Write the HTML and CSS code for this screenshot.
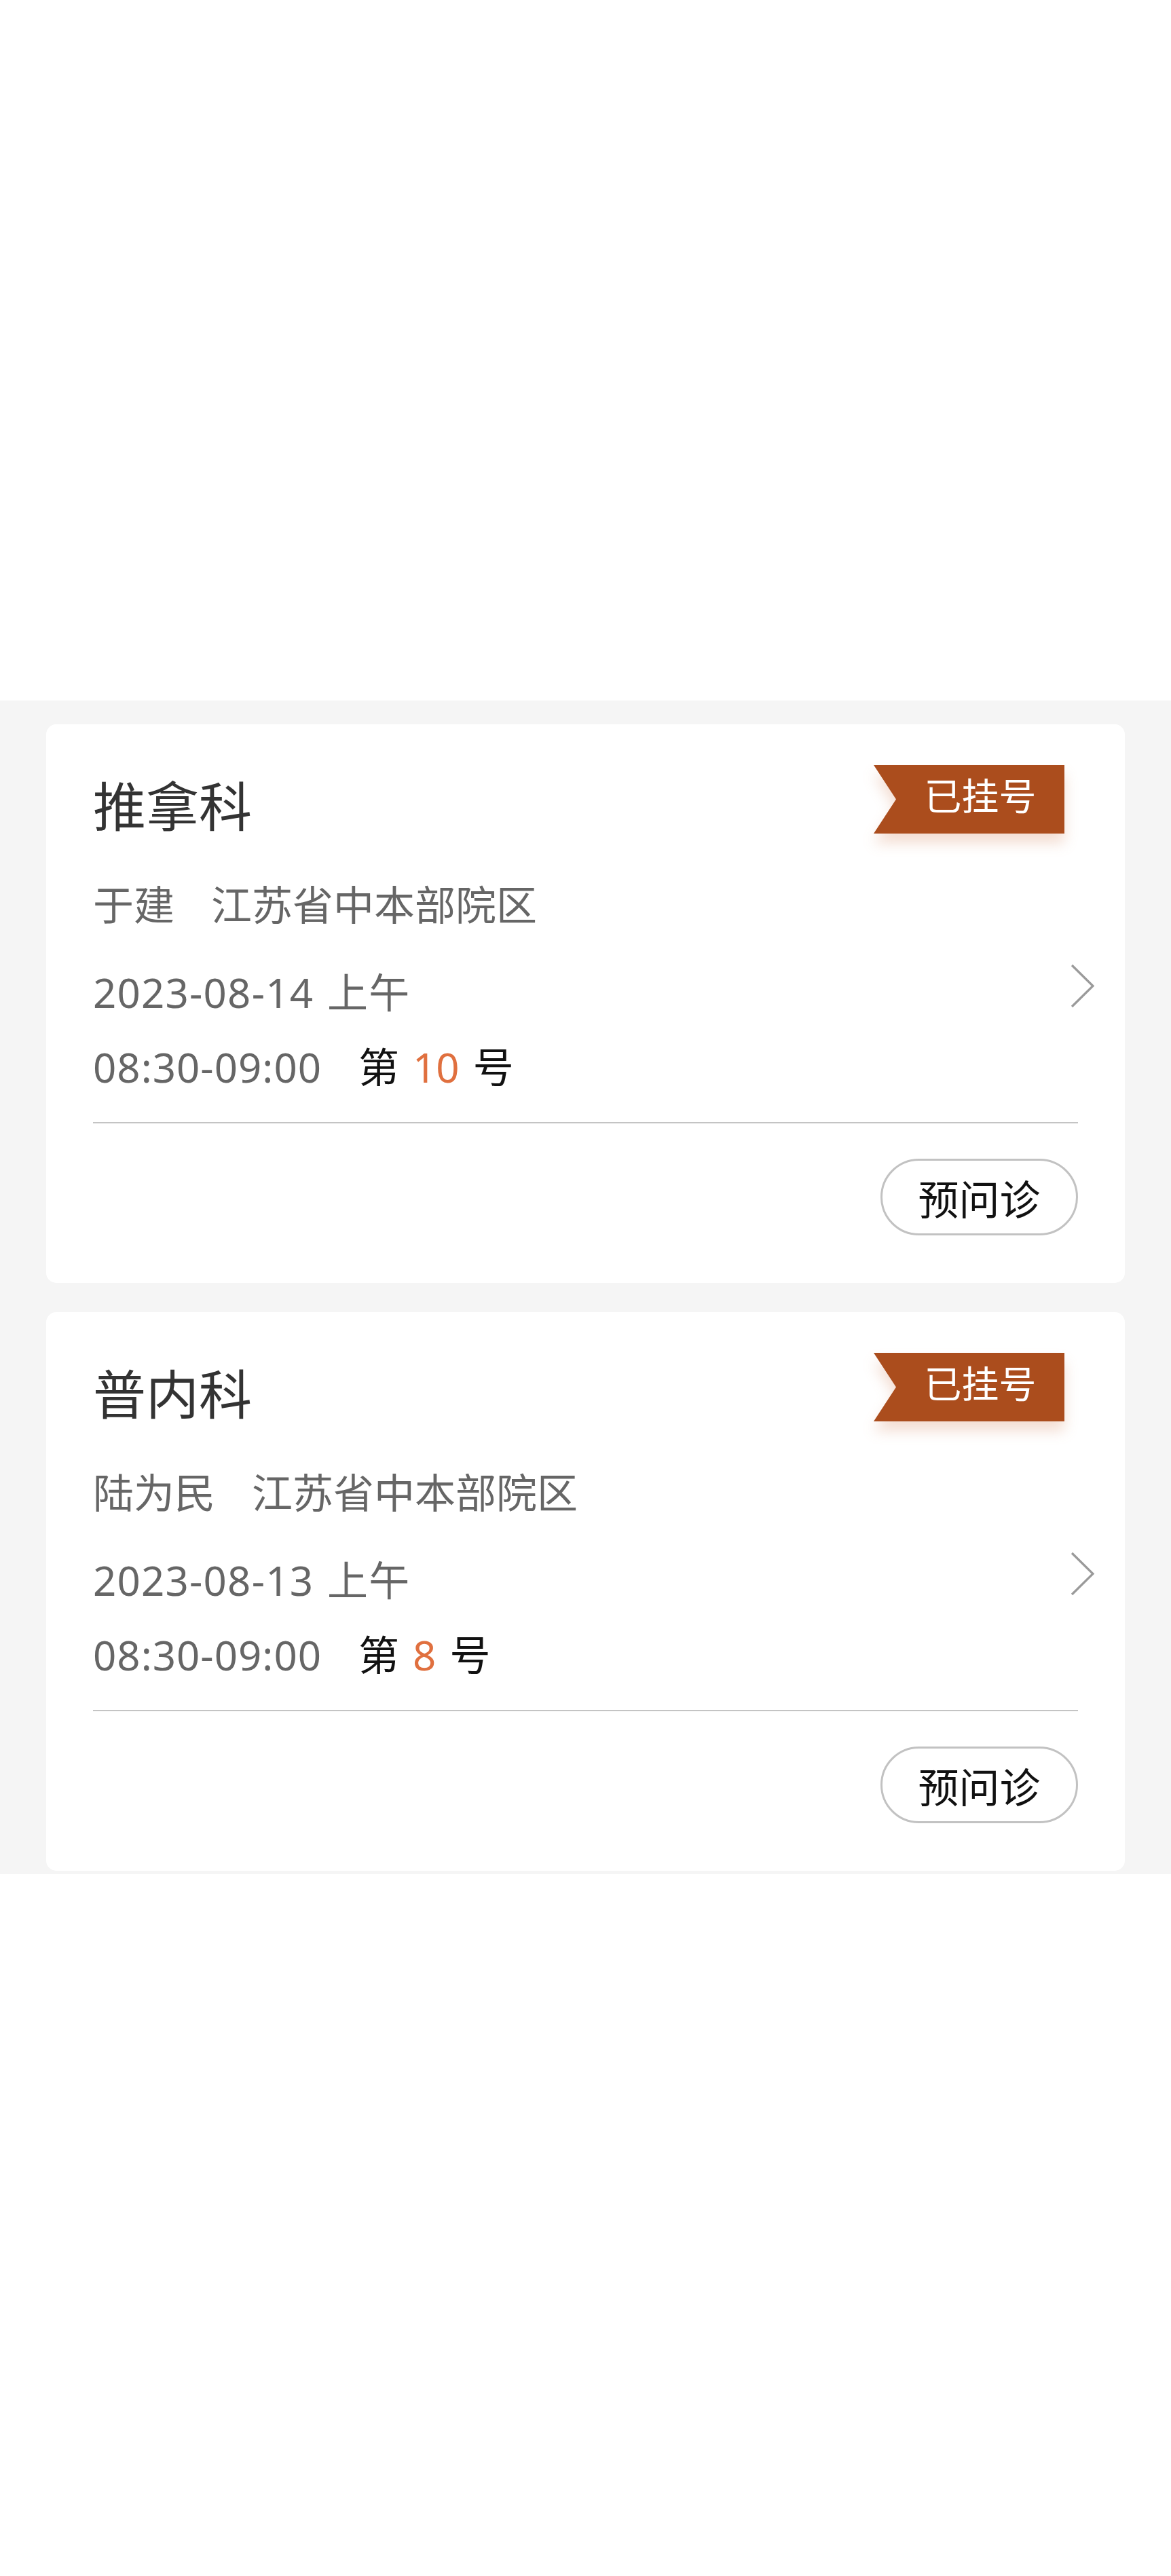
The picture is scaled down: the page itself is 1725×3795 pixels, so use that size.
FILE: index.html
```html
<!DOCTYPE html>
<html lang="zh-CN">
<head>
    <meta charset="UTF-8">
    <title>我的挂号</title>
    <link rel="stylesheet" href="styles.css">
</head>
<body>
<div class="top-blank"></div>
<div class="list">
    <div class="card">
        <div class="card-head">
            <div class="dept">推拿科</div>
            <div class="tag-wrap"><div class="tag">已挂号</div></div>
        </div>
        <div class="card-body">
            <div class="info">
                <div class="line doctor">于建<span class="area">江苏省中本部院区</span></div>
                <div class="line date">2023-08-14 上午</div>
                <div class="line time">08:30-09:00<span class="order">第<em class="num">10</em>号</span></div>
            </div>
            <svg class="arrow" width="36" height="65" viewBox="0 0 36 65">
                <polyline points="2,2 33,32.5 2,63" fill="none" stroke="#9a9a9a" stroke-width="3.2"/>
            </svg>
        </div>
        <div class="divider"></div>
        <div class="card-foot">
            <div class="btn">预问诊</div>
        </div>
    </div>
    <div class="card">
        <div class="card-head">
            <div class="dept">普内科</div>
            <div class="tag-wrap"><div class="tag">已挂号</div></div>
        </div>
        <div class="card-body">
            <div class="info">
                <div class="line doctor">陆为民<span class="area">江苏省中本部院区</span></div>
                <div class="line date">2023-08-13 上午</div>
                <div class="line time">08:30-09:00<span class="order">第<em class="num">8</em>号</span></div>
            </div>
            <svg class="arrow" width="36" height="65" viewBox="0 0 36 65">
                <polyline points="2,2 33,32.5 2,63" fill="none" stroke="#9a9a9a" stroke-width="3.2"/>
            </svg>
        </div>
        <div class="divider"></div>
        <div class="card-foot">
            <div class="btn">预问诊</div>
        </div>
    </div>
</div>
</body>
</html>
```

FILE: styles.css
```css
body {
    margin: 0;
    background: #fff;
    font-family: "Noto Sans", "Noto Sans CJK SC", sans-serif;
}

.top-blank {
    height: 1032px;
}

.list {
    background: #f5f5f5;
    padding: 35px 68px 5px;
    display: flex;
    flex-direction: column;
    gap: 43px;
}

.card {
    background: #fff;
    border-radius: 15px;
    padding: 60px 69px 70px;
}

.card-head {
    display: flex;
    justify-content: space-between;
    align-items: center;
    height: 101px;
}

.dept {
    font-size: 78px;
    line-height: 100px;
    color: #333;
    margin-top: 20px;
}

.tag-wrap {
    margin-right: 20px;
    filter: drop-shadow(0 14px 10px rgba(200, 100, 50, 0.22));
}

.tag {
    width: 281px;
    height: 101px;
    box-sizing: border-box;
    padding: 0 0 18px 33px;
    background: #ab4d1d;
    color: #fff;
    font-size: 55px;
    display: flex;
    align-items: center;
    justify-content: center;
    clip-path: polygon(0 0, 100% 0, 100% 100%, 0 100%, 33px 50%);
}

.card-body {
    display: flex;
    align-items: center;
    margin-top: 65px;
}

.info {
    flex: 1;
}

.line {
    font-size: 60px;
    line-height: 80px;
    color: #666;
    white-space: nowrap;
}

.date {
    margin-top: 49px;
    letter-spacing: 1.2px;
    word-spacing: 3px;
}

.time {
    margin-top: 30px;
    letter-spacing: 1px;
}

.area {
    margin-left: 54px;
}

.order {
    margin-left: 54px;
    color: #111;
    letter-spacing: 0;
}

.num {
    font-style: normal;
    color: #e0703f;
    margin: 0 20px;
}

.arrow {
    margin-right: -25px;
    flex-shrink: 0;
}

.divider {
    height: 2px;
    background: #c4c4c4;
    margin-top: 41px;
}

.card-foot {
    display: flex;
    justify-content: flex-end;
    margin-top: 52px;
}

.btn {
    width: 291px;
    height: 113px;
    box-sizing: border-box;
    border: 3px solid #c2c2c2;
    border-radius: 57px;
    font-size: 60px;
    color: #111;
    display: flex;
    align-items: center;
    justify-content: center;
}
```
